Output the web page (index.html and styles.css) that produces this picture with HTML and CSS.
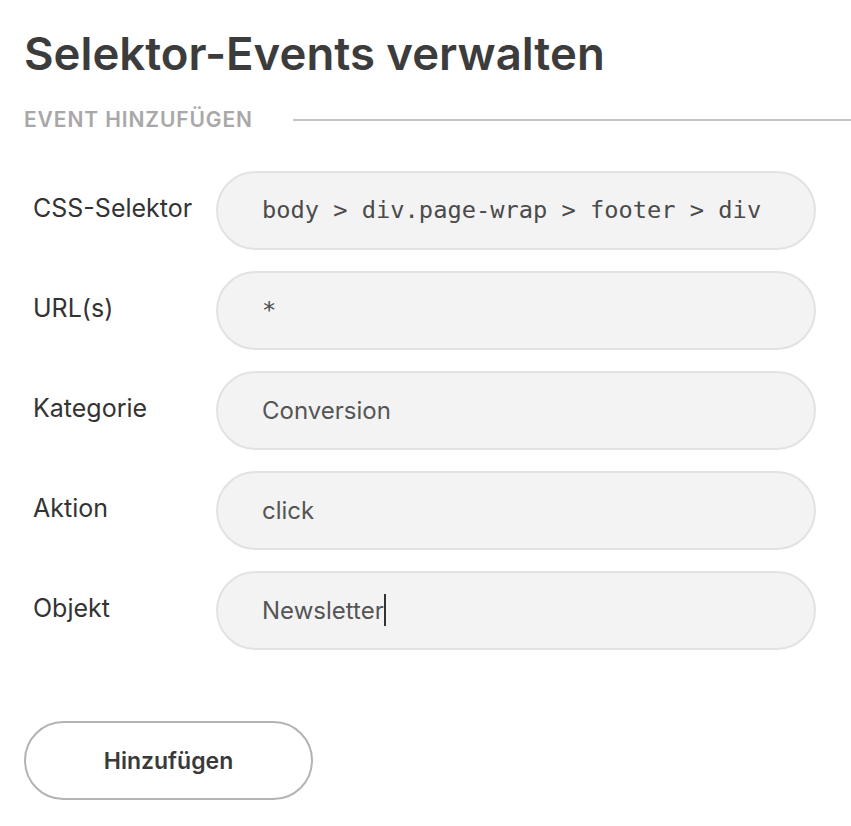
FILE: index.html
```html
<!doctype html>
<html lang="de">
<head>
<meta charset="utf-8">
<title>Selektor-Events verwalten</title>
<link rel="stylesheet" href="styles.css">
</head>
<body>

<div id="container">
  <h1>Selektor-Events verwalten</h1>

  <div class="section-title">
    <h2>Event hinzufügen</h2>
    <span class="rule"></span>
  </div>

  <form class="event-form">
    <div class="form-row">
      <label>CSS-Selektor</label>
      <div class="field mono">body &gt; div.page-wrap &gt; footer &gt; div</div>
    </div>
    <div class="form-row">
      <label>URL(s)</label>
      <div class="field mono">*</div>
    </div>
    <div class="form-row">
      <label>Kategorie</label>
      <div class="field">Conversion</div>
    </div>
    <div class="form-row">
      <label>Aktion</label>
      <div class="field">click</div>
    </div>
    <div class="form-row">
      <label>Objekt</label>
      <div class="field">Newsletter<span class="caret"></span></div>
    </div>

    <button type="button" class="add">Hinzufügen</button>
  </form>
</div>

</body>
</html>
```

FILE: styles.css
```css
body {
  margin: 0;
  background: #fff;
  font-family: Inter, Lato, sans-serif;
  color: #333;
}

#container {
  padding: 26px 0 0 24px;
}

#container h1 {
  margin: 0;
  font-size: 45.5px;
  font-weight: 600;
  color: #3c3c3c;
  line-height: 56px;
}

#container .section-title {
  display: flex;
  align-items: center;
  gap: 40px;
  margin-top: 25px;
}

#container .section-title h2 {
  margin: 0;
  font-size: 21px;
  font-weight: 600;
  letter-spacing: 0.9px;
  text-transform: uppercase;
  color: #a8a8a8;
  line-height: 26px;
}

#container .section-title .rule {
  flex: 1;
  height: 2px;
  background: #c4c4c4;
}

#container .event-form {
  margin-top: 38px;
}

#container .form-row {
  display: flex;
  align-items: center;
  height: 78px;
  margin-bottom: 22px;
}

#container .form-row label {
  width: 183px;
  padding-left: 9px;
  font-size: 25px;
  color: #333;
  margin-top: -4px;
}

#container .field {
  box-sizing: border-box;
  width: 600px;
  height: 79px;
  display: flex;
  align-items: center;
  padding: 0 44px;
  border: 2px solid #e2e2e2;
  border-radius: 40px;
  background: #f3f3f3;
  font-size: 24px;
  color: #555;
}

#container .field.mono {
  font-family: "DejaVu Sans Mono", monospace;
  font-size: 23.7px;
  color: #4a4a4a;
}

#container .caret {
  display: inline-block;
  width: 2px;
  height: 32px;
  background: #333;
}

#container .add {
  margin-top: 50px;
  width: 289px;
  height: 79px;
  border: 2px solid #b3b3b3;
  border-radius: 40px;
  background: #fff;
  font-family: Inter, Lato, sans-serif;
  font-size: 23px;
  font-weight: 600;
  color: #3a3a3a;
  cursor: pointer;
}
```
